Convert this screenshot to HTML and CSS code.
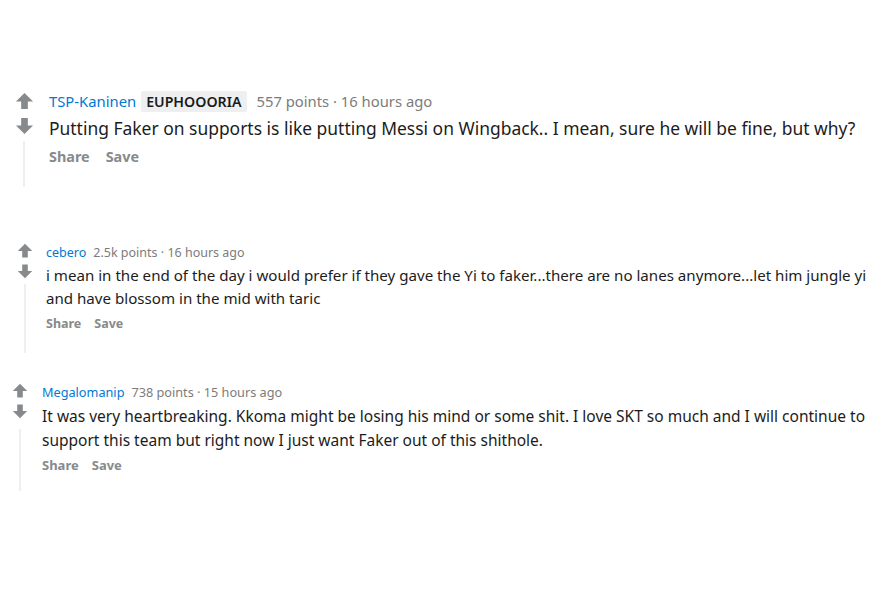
FILE: index.html
```html
<!DOCTYPE html>
<html>
<head>
<meta charset="utf-8">
<link rel="stylesheet" href="styles.css">
</head>
<body>
<div class="page">
  <div class="comment c1">
    <div class="vote">
      <svg class="arrow" viewBox="0 0 20 20"><path d="M10 1 L19 10 H13.5 V18 H6.5 V10 H1 Z"/></svg>
      <svg class="arrow" viewBox="0 0 20 20"><path d="M10 19 L19 10 H13.5 V2 H6.5 V10 H1 Z"/></svg>
      <div class="thread"></div>
    </div>
    <div class="content">
      <div class="meta"><a class="user">TSP-Kaninen</a><span class="flair">EUPHOOORIA</span><span class="info">557 points · 16 hours ago</span></div>
      <p class="body">Putting Faker on supports is like putting Messi on Wingback.. I mean, sure he will be fine, but why?</p>
      <div class="actions"><span>Share</span><span>Save</span></div>
    </div>
  </div>

  <div class="comment c2">
    <div class="vote">
      <svg class="arrow" viewBox="0 0 20 20"><path d="M10 1 L19 10 H13.5 V18 H6.5 V10 H1 Z"/></svg>
      <svg class="arrow" viewBox="0 0 20 20"><path d="M10 19 L19 10 H13.5 V2 H6.5 V10 H1 Z"/></svg>
      <div class="thread"></div>
    </div>
    <div class="content">
      <div class="meta"><a class="user">cebero</a><span class="info">2.5k points · 16 hours ago</span></div>
      <p class="body">i mean in the end of the day i would prefer if they gave the Yi to faker...there are no lanes anymore...let him jungle yi and have blossom in the mid with taric</p>
      <div class="actions"><span>Share</span><span>Save</span></div>
    </div>
  </div>

  <div class="comment c3">
    <div class="vote">
      <svg class="arrow" viewBox="0 0 20 20"><path d="M10 1 L19 10 H13.5 V18 H6.5 V10 H1 Z"/></svg>
      <svg class="arrow" viewBox="0 0 20 20"><path d="M10 19 L19 10 H13.5 V2 H6.5 V10 H1 Z"/></svg>
      <div class="thread"></div>
    </div>
    <div class="content">
      <div class="meta"><a class="user">Megalomanip</a><span class="info">738 points · 15 hours ago</span></div>
      <p class="body">It was very heartbreaking. Kkoma might be losing his mind or some shit. I love SKT so much and I will continue to support this team but right now I just want Faker out of this shithole.</p>
      <div class="actions"><span>Share</span><span>Save</span></div>
    </div>
  </div>
</div>
</body>
</html>
```

FILE: styles.css
```css
* { box-sizing: border-box; }
html, body { margin: 0; padding: 0; background: #fff; }
body { width: 886px; height: 591px; overflow: hidden; font-family: "Noto Sans", "Open Sans", sans-serif; }
.page { padding-top: 91px; }

.comment { display: flex; align-items: stretch; }
.vote { display: flex; flex-direction: column; align-items: center; flex: none; }
.arrow { display: block; fill: #878a8c; }
.thread { width: 2px; background: #edeff1; flex: 1; }
.content { flex: 1; min-width: 0; }
.meta { display: flex; align-items: center; white-space: nowrap; }
.user { color: #0079d3; text-decoration: none; }
.info { color: #7c7c7c; }
.flair { background: #edeff1; color: #1a1a1b; font-weight: 600; border-radius: 2px; }
.body { margin: 0; color: #1c1c1c; }
.actions { display: flex; color: #878a8c; font-weight: 700; }

/* comment 1 */
.c1 { padding-left: 15px; height: 96px; }
.c1 .vote { width: 18px; margin-right: 16px; }
.c1 .arrow { width: 19px; height: 19px; margin-top: 1px; }
.c1 .arrow + .arrow { margin-top: 5px; }
.c1 .thread { margin-top: 6px; }
.c1 .meta { font-size: 14.8px; height: 20px; }
.c1 .flair { padding: 1px 5px; margin-left: 5px; font-size: 14.2px; }
.c1 .info { margin-left: 10px; }
.c1 .body { font-size: 17.45px; line-height: 26px; margin-top: 4px; }
.c1 .actions { font-size: 14.4px; margin-top: 6px; line-height: 20px; }
.c1 .actions span { margin-right: 16px; }

/* comment 2 */
.c2 { padding-left: 17px; margin-top: 56px; height: 110px; }
.c2 .vote { width: 15px; margin-right: 14px; }
.c2 .arrow { width: 16px; height: 16px; }
.c2 .arrow + .arrow { margin-top: 4px; }
.c2 .thread { margin-top: 5px; }
.c2 .meta { font-size: 12.5px; height: 18px; }
.c2 .info { margin-left: 7px; }
.c2 .body { font-size: 15.12px; line-height: 23px; margin-top: 3px; }
.c2 .actions { font-size: 12.5px; margin-top: 5px; line-height: 18px; }
.c2 .actions span { margin-right: 13px; }

/* comment 3 */
.c3 { padding-left: 12px; margin-top: 30px; height: 108px; }
.c3 .vote { width: 16px; margin-right: 14px; }
.c3 .arrow { width: 16px; height: 16px; }
.c3 .arrow + .arrow { margin-top: 4px; }
.c3 .thread { margin-top: 10px; }
.c3 .meta { font-size: 12.7px; height: 18px; }
.c3 .info { margin-left: 7px; }
.c3 .body { font-size: 15.5px; line-height: 24px; margin-top: 3px; }
.c3 .actions { font-size: 13px; margin-top: 4px; line-height: 18px; }
.c3 .actions span { margin-right: 13px; }
```
